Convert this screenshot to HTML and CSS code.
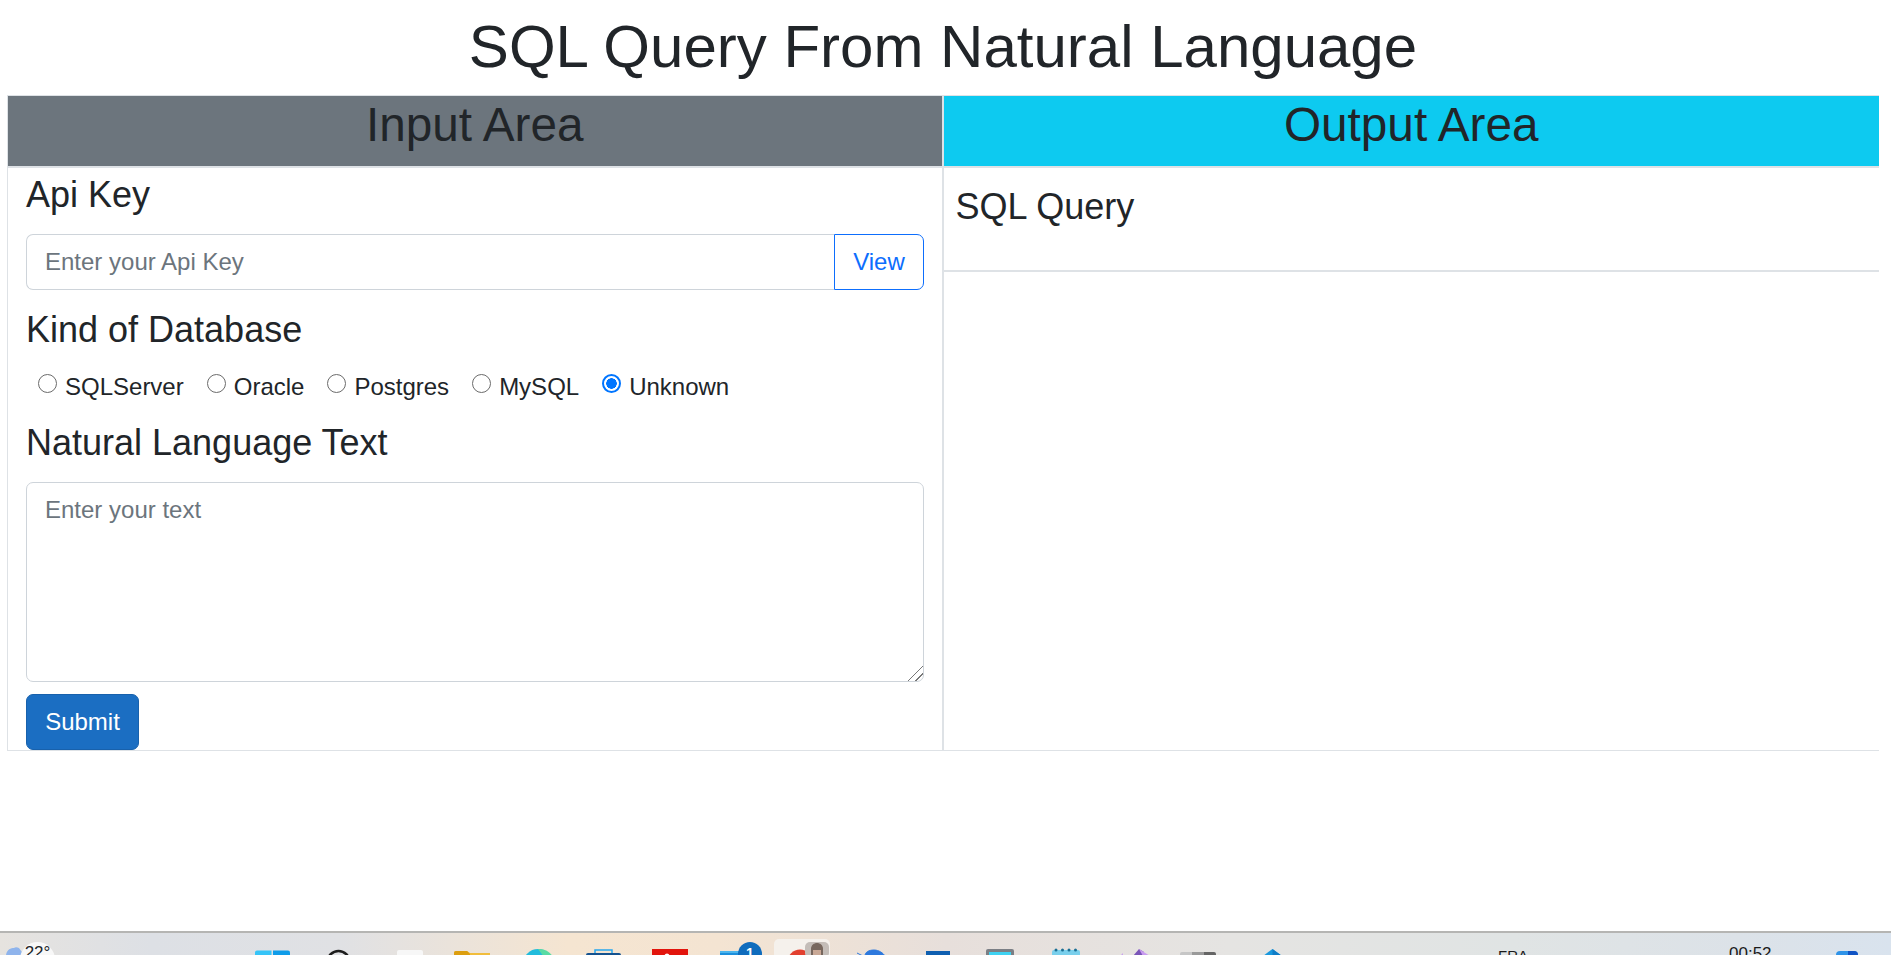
FILE: index.html
```html
<!DOCTYPE html>
<html lang="en">
<head>
    <meta charset="UTF-8">
    <meta name="viewport" content="width=device-width, initial-scale=1.0">
    <title>SQL Query From Natural Language</title>
    <link rel="stylesheet" href="styles.css">
</head>
<body>
    <main class="page">
        <h1 class="page-title">SQL Query From Natural Language</h1>
        <div class="panels">
            <section class="panel panel-input">
                <h2 class="panel-head head-gray">Input Area</h2>
                <div class="panel-body">
                    <label class="field-label label-api" for="api_key">Api Key</label>
                    <div class="input-group">
                        <input class="text-input" type="password" id="api_key" placeholder="Enter your Api Key">
                        <button class="btn-view" type="button">View</button>
                    </div>

                    <div class="field-label label-kind">Kind of Database</div>
                    <div class="radio-row">
                        <label class="radio-item"><input type="radio" name="db_kind"> SQLServer</label>
                        <label class="radio-item"><input type="radio" name="db_kind"> Oracle</label>
                        <label class="radio-item"><input type="radio" name="db_kind"> Postgres</label>
                        <label class="radio-item"><input type="radio" name="db_kind"> MySQL</label>
                        <label class="radio-item"><input type="radio" name="db_kind" checked> Unknown</label>
                    </div>

                    <label class="field-label label-text" for="nl_text">Natural Language Text</label>
                    <textarea class="text-area" id="nl_text" placeholder="Enter your text"></textarea>
                    <button class="btn-submit" type="button">Submit</button>
                </div>
            </section>

            <section class="panel panel-output">
                <h2 class="panel-head head-cyan">Output Area</h2>
                <div class="output-row">SQL Query</div>
            </section>
        </div>
    </main>

    <footer class="taskbar">
        <div class="weather">
            <svg class="cloud" viewBox="0 0 20 22"><path d="M0 22c1-6 5-7 8-7 1-1 3-1 5 0l5 7z" fill="#8fb4ec"/></svg>
            <span class="weather-temp">22°</span>
        </div>

        <svg class="ico ico-win" viewBox="0 0 35 22"><path d="M0 19.500a2 2 0 0 1 2-2h14.500v6H0z" fill="#36c4f8"/><path d="M18 17.500h15a2 2 0 0 1 2 2v4H18z" fill="#0f9ce9"/></svg>
        <svg class="ico ico-search" viewBox="0 0 23 22"><circle cx="11.500" cy="29" r="11" fill="none" stroke="#1d1d1d" stroke-width="2.500"/></svg>
        <svg class="ico ico-page" viewBox="0 0 26 22"><path d="M0 19a2 2 0 0 1 2-2h22a2 2 0 0 1 2 2v4H0z" fill="#f7f7f7"/></svg>
        <svg class="ico ico-folder" viewBox="0 0 36 22"><path d="M0 20a2 2 0 0 1 2-2h11l3 2h20v3H0z" fill="#f1bd3c"/><path d="M0 20a2 2 0 0 1 2-2h11l3 3v2H0z" fill="#dc9e0f"/></svg>
        <svg class="ico ico-edge" viewBox="0 0 30 22"><circle cx="15" cy="31" r="15" fill="#22bcdc"/><path d="M15 16a15 15 0 0 1 15 8h-9z" fill="#58dba4"/></svg>
        <svg class="ico ico-store" viewBox="0 0 35 22"><path d="M9 20v-3h17v3" fill="none" stroke="#26a7ee" stroke-width="1.500"/><path d="M2 20h31a2 2 0 0 1 2 2v1H0v-1a2 2 0 0 1 2-2z" fill="#14528f"/></svg>
        <svg class="ico ico-red" viewBox="0 0 36 22"><rect y="16" width="36" height="8" fill="#e2140c"/><circle cx="15" cy="23" r="2.500" fill="#fff"/></svg>

        <div class="mail">
            <svg class="ico-mail" viewBox="0 0 26 13"><path d="M0 3h26v10H0z" fill="#1c8fdc"/><path d="M0 3h26v2H0z" fill="#4bb5ee"/></svg>
            <span class="badge">1</span>
        </div>

        <div class="active-tile">
            <svg class="ico-browser" viewBox="0 0 26 16"><circle cx="13" cy="13" r="12.500" fill="#e2402f"/></svg>
            <svg class="ico-photo" viewBox="0 0 24 16"><rect width="24" height="16" rx="5" fill="#c4bdb8"/><path d="M6 16V7c0-4 3-6 6-6s6 2 6 6v9z" fill="#77675e"/><path d="M8 16V8h8v8z" fill="#c9a896"/></svg>
        </div>

        <svg class="ico ico-bird" viewBox="0 0 28 22"><path d="M0 20l6 3M8 23c0-4 4-6 9-6s9 3 11 6z" fill="#2e79dd" stroke="#2e79dd"/></svg>
        <svg class="ico ico-blue" viewBox="0 0 24 22"><rect y="18" width="24" height="5" fill="#0f5fb0"/></svg>
        <svg class="ico ico-screen" viewBox="0 0 28 22"><path d="M2 16h24a2 2 0 0 1 2 2v5H0v-5a2 2 0 0 1 2-2z" fill="#7b7f85"/><rect x="3" y="19" width="22" height="4" fill="#3fd2f2"/></svg>
        <svg class="ico ico-cal" viewBox="0 0 28 22"><path d="M2 17h24a2 2 0 0 1 2 2v4H0v-4a2 2 0 0 1 2-2z" fill="#79cfec"/><g fill="#1a6f94"><circle cx="4" cy="17" r="1.500"/><circle cx="10.500" cy="17" r="1.500"/><circle cx="17" cy="17" r="1.500"/><circle cx="23.500" cy="17" r="1.500"/></g></svg>
        <svg class="ico ico-vs" viewBox="0 0 30 22"><path d="M0 23l3-3v3z" fill="#c9a3ee"/><path d="M13 23l6-7 5 3-2 4z" fill="#7a55b8"/><path d="M19 16l11 7h-7z" fill="#c99bf0"/></svg>
        <svg class="ico ico-bar" viewBox="0 0 36 22"><path d="M2 19h10v4H0v-2a2 2 0 0 1 2-2z" fill="#c6c6c6"/><rect x="12" y="19" width="12" height="4" fill="#9a9a9a"/><path d="M24 19h10a2 2 0 0 1 2 2v2H24z" fill="#656565"/></svg>
        <svg class="ico ico-house" viewBox="0 0 19 22"><path d="M0 23l9.500-7 9.500 7z" fill="#1998de"/><path d="M9.500 16l9.500 7H9.500z" fill="#0f7cc6"/></svg>

        <span class="tray-text tray-lang">FRA</span>
        <span class="tray-text tray-clock">00:52</span>
        <svg class="ico ico-tray" viewBox="0 0 22 22"><path d="M4 18h14a4 4 0 0 1 4 4v1H0v-1a4 4 0 0 1 4-4z" fill="#2f93e8"/><path d="M12 18h6a4 4 0 0 1 4 4v1H12z" fill="#1153c4"/></svg>
    </footer>
</body>
</html>
```

FILE: styles.css
```css
body {
    font-family: "Liberation Sans", Arial, sans-serif;
    color: #212529;
    background-color: #ffffff;
    margin: 0;
    height: 955px;
    display: flex;
    flex-direction: column;
    overflow: hidden;
}
.page {
    flex: 1;
    margin: 0 12px 0 7px;
}
.page-title {
    font-size: 60px;
    font-weight: 400;
    line-height: 72px;
    text-align: center;
    margin: 11px 0 12px 0;
}

/* the two columns */
.panels {
    display: grid;
    grid-template-columns: 1fr 1fr;
    box-sizing: border-box;
    height: 656px;
    border-top: 1px solid #dee2e6;
    border-bottom: 1px solid #dee2e6;
    border-left: 1px solid #dee2e6;
}
.panel-input {
    border-right: 2px solid #dee2e6;
}
.panel-head {
    font-size: 47.7px;
    font-weight: 400;
    line-height: 58px;
    height: 70px;
    margin: 0;
    text-align: center;
}
.head-gray {
    background-color: #6c757d;
}
.head-cyan {
    background-color: #0dcaf0;
}
.panel-body {
    border-top: 2px solid #dee2e6;
    padding: 5px 18px 0 18px;
}

/* left side form */
.field-label {
    display: block;
    font-size: 36px;
    line-height: 43px;
}
.label-api {
    margin-bottom: 18px;
}
.label-kind {
    margin-top: 18px;
}
.label-text {
    margin-top: 16px;
    margin-bottom: 18px;
}
.input-group {
    display: flex;
    height: 56px;
}
.text-input {
    flex: 1;
    min-width: 0;
    font-family: inherit;
    font-size: 24px;
    color: #212529;
    padding: 0 18px;
    border: 1px solid #ced4da;
    border-right: 0;
    border-radius: 7px 0 0 7px;
    outline: none;
}
.text-input::placeholder, .text-area::placeholder {
    color: #6c757d;
    opacity: 1;
}
.btn-view {
    width: 90px;
    font-family: inherit;
    font-size: 24px;
    color: #0d6efd;
    background: #ffffff;
    border: 1px solid #0d6efd;
    border-radius: 0 7px 7px 0;
    padding: 0 0 0 1px;
}
.radio-row {
    display: flex;
    gap: 23px;
    padding-left: 12px;
    margin-top: 18px;
    font-size: 24px;
    line-height: 36px;
}
.radio-item {
    display: flex;
    align-items: center;
    gap: 8px;
}
.radio-item input {
    appearance: none;
    box-sizing: border-box;
    width: 19px;
    height: 19px;
    margin: 0 0 7px 0;
    border: 1px solid #6b6b6b;
    border-radius: 50%;
    background: #ffffff;
}
.radio-item input:checked {
    border: 2px solid #0075ff;
    background: radial-gradient(circle, #0075ff 0 5px, #ffffff 5.5px);
}
.text-area {
    display: block;
    box-sizing: border-box;
    width: 100%;
    height: 200px;
    font-family: inherit;
    font-size: 24px;
    line-height: 36px;
    padding: 9px 18px;
    border: 1px solid #ced4da;
    border-radius: 7px;
    outline: none;
}
.text-area::-webkit-resizer {
    background: linear-gradient(135deg, transparent 0 47%, #777777 47% 53%, transparent 53% 71%, #777777 71% 77%, transparent 77%);
}
.btn-submit {
    display: block;
    margin-top: 12px;
    width: 113px;
    height: 56px;
    font-family: inherit;
    font-size: 24px;
    color: #ffffff;
    background-color: #1b6ec2;
    border: 1px solid #1861ac;
    border-radius: 7px;
    padding: 0;
}

/* right side */
.output-row {
    box-sizing: border-box;
    border-top: 2px solid #dee2e6;
    border-bottom: 2px solid #dee2e6;
    height: 106px;
    font-size: 36px;
    line-height: 43px;
    padding: 17px 12px 0 12px;
}

/* windows taskbar, cut by the bottom of the window */
.taskbar {
    position: relative;
    flex: none;
    height: 22px;
    display: flex;
    align-items: flex-start;
    overflow: hidden;
    border-top: 2px solid #b5b5b3;
    background: linear-gradient(90deg, #e6e3df 0%, #dde0e5 8%, #e0e1e4 18%, #f5e5d1 30%, #f4e4d2 38%, #e7dfdb 50%, #e5e4e2 65%, #e0e4e4 80%, #dce2e8 92%, #d9e3ee 100%);
}
.ico {
    display: block;
    flex: none;
    height: 22px;
}
.weather {
    position: relative;
    flex: none;
    width: 58px;
    height: 22px;
}
.cloud {
    position: absolute;
    left: 6px;
    top: 0;
    width: 20px;
    height: 22px;
}
.weather-temp {
    position: absolute;
    left: 20px;
    top: 9px;
    width: 35px;
    height: 40px;
    border-radius: 18px;
    background: #f8f8f8;
    font-size: 17px;
    line-height: 22px;
    text-align: center;
}
.ico-win { width: 35px; margin-left: 197px; }
.ico-search { width: 23px; margin-left: 37px; }
.ico-page { width: 26px; margin-left: 47px; }
.ico-folder { width: 36px; margin-left: 31px; }
.ico-edge { width: 30px; margin-left: 33px; }
.ico-store { width: 35px; margin-left: 33px; }
.ico-red { width: 36px; margin-left: 31px; }
.mail {
    position: relative;
    flex: none;
    width: 42px;
    height: 22px;
    margin-left: 32px;
}
.ico-mail {
    position: absolute;
    left: 0;
    top: 15px;
    width: 26px;
    height: 13px;
}
.badge {
    position: absolute;
    left: 18px;
    top: 9px;
    width: 24px;
    height: 24px;
    border-radius: 50%;
    background: #0f6cbd;
    color: #ffffff;
    font-size: 14px;
    font-weight: 700;
    line-height: 22px;
    text-align: center;
}
.active-tile {
    position: relative;
    flex: none;
    width: 56px;
    height: 30px;
    margin: 6px 0 0 12px;
    border-radius: 5px;
    background: #f5f1ec;
}
.ico-browser {
    position: absolute;
    left: 13px;
    top: 10px;
    width: 26px;
    height: 16px;
}
.ico-photo {
    position: absolute;
    right: 1px;
    top: 3px;
    width: 24px;
    height: 16px;
}
.ico-bird { width: 28px; margin-left: 27px; }
.ico-blue { width: 24px; margin-left: 41px; }
.ico-screen { width: 28px; margin-left: 36px; }
.ico-cal { width: 28px; margin-left: 38px; }
.ico-vs { width: 30px; margin-left: 40px; }
.ico-bar { width: 36px; margin-left: 30px; }
.ico-house { width: 19px; margin-left: 47px; }
.tray-text {
    flex: none;
    font-size: 15px;
    line-height: 18px;
    color: #1a1a1a;
}
.tray-lang { margin: 14px 0 0 216px; width: 29px; }
.tray-clock { margin: 12px 0 0 202px; width: 42px; font-size: 17px; }
.ico-tray { width: 22px; margin-left: 65px; }
```
